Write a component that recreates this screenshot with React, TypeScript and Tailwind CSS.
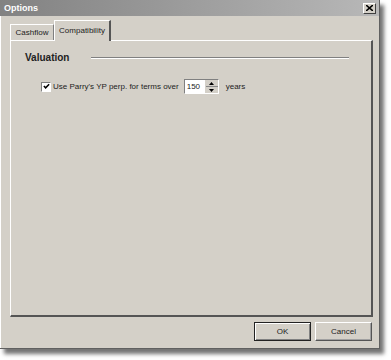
import React from "react";

const FONT = { fontFamily: "Tahoma, 'Liberation Sans', Arial, sans-serif" };

function TitleBar() {
  return (
    <div className="flex h-[16px] items-center justify-between bg-gradient-to-r from-[#828282] to-[#b8b8b8] pl-[4px] pr-[3px]">
      <span className="text-[9px] font-bold leading-none text-white">Options</span>
      <button className="flex h-[11px] w-[13px] items-center justify-center border border-t-white border-l-white border-r-[#404040] border-b-[#404040] bg-[#d4d0c8]">
        <svg width="7" height="6" viewBox="0 0 7 6">
          <path d="M0 0 L7 6 M7 0 L0 6" stroke="#000" strokeWidth="1.6" />
        </svg>
      </button>
    </div>
  );
}

function Tabs() {
  return (
    <div className="flex h-[20px] items-end pl-[9px]">
      <div className="flex h-[16px] w-[44px] items-center justify-center border-l border-t border-white border-r border-r-[#808080] text-[8px] text-[#222]">
        Cashflow
      </div>
      <div className="relative -mb-[1px] flex h-[21px] w-[57px] items-center justify-center border-l border-t border-white border-r-2 border-r-[#555] bg-[#d4d0c8] text-[8px] text-[#222]">
        Compatibility
      </div>
    </div>
  );
}

function Spinner() {
  return (
    <div className="flex h-[15px] w-[35px] items-stretch border border-t-[#808080] border-l-[#808080] border-b-white border-r-white bg-white">
      <div className="flex flex-1 items-center pl-[2px] text-[8px] text-[#222]">150</div>
      <div className="flex w-[13px] flex-col border-l border-[#d4d0c8]">
        <div className="flex flex-1 items-center justify-center border-b border-b-[#888] bg-[#d4d0c8]">
          <svg width="5" height="3" viewBox="0 0 5 3"><path d="M2.5 0 L5 3 L0 3 Z" fill="#000" /></svg>
        </div>
        <div className="flex flex-1 items-center justify-center bg-[#d4d0c8]">
          <svg width="5" height="3" viewBox="0 0 5 3"><path d="M0 0 L5 0 L2.5 3 Z" fill="#000" /></svg>
        </div>
      </div>
    </div>
  );
}

function Checkbox() {
  return (
    <div className="flex h-[10px] w-[10px] items-center justify-center border border-t-[#808080] border-l-[#808080] border-b-white border-r-white bg-white">
      <svg width="7" height="7" viewBox="0 0 8 8">
        <path d="M1 3.5 L3 5.5 L7 1.5" stroke="#000" strokeWidth="1.8" fill="none" />
      </svg>
    </div>
  );
}

function Button({ label, focused }: { label: string; focused?: boolean }) {
  return (
    <button
      className={
        "flex h-[19px] w-[57px] items-center justify-center bg-[#d4d0c8] text-[8px] text-[#222] " +
        (focused
          ? "border border-[#222] shadow-[inset_1px_1px_0_#fff,inset_-1px_-1px_0_#808080]"
          : "border border-t-white border-l-white border-r-[#555] border-b-[#555] shadow-[inset_-1px_-1px_0_#a0a0a0]")
      }
    >
      {label}
    </button>
  );
}

export default function App() {
  return (
    <div className="h-[360px] w-[391px] bg-white" style={FONT}>
      <div className="flex h-[349px] w-[380px] flex-col border-r border-b border-[#606060] bg-[#d4d0c8] shadow-[4px_5px_4px_rgba(0,0,0,0.55)]">
        <TitleBar />
        <div className="flex flex-1 flex-col border-l border-white">
          <div className="pt-[4px]">
            <Tabs />
          </div>
          <div className="ml-[9px] mr-[6px] flex h-[277px] flex-col border-l border-t border-white border-r-2 border-b-2 border-r-[#555] border-b-[#555] px-[14px] pt-[9px]">
            <div className="flex h-[15px] items-center gap-[22px]">
              <span className="text-[10px] font-bold text-[#222]">Valuation</span>
              <div className="mr-[8px] h-[2px] flex-1 border-t border-[#808080] border-b border-b-white" />
            </div>
            <div className="mt-[14px] flex items-center pl-[16px] text-[8px] text-[#222]">
              <Checkbox />
              <span className="ml-[2px]">Use Parry's YP perp. for terms over</span>
              <div className="ml-[5px]">
                <Spinner />
              </div>
              <span className="ml-[7px]">years</span>
            </div>
          </div>
          <div className="mt-[5px] flex justify-end gap-[4px] pr-[7px]">
            <Button label="OK" focused />
            <Button label="Cancel" />
          </div>
        </div>
      </div>
    </div>
  );
}
